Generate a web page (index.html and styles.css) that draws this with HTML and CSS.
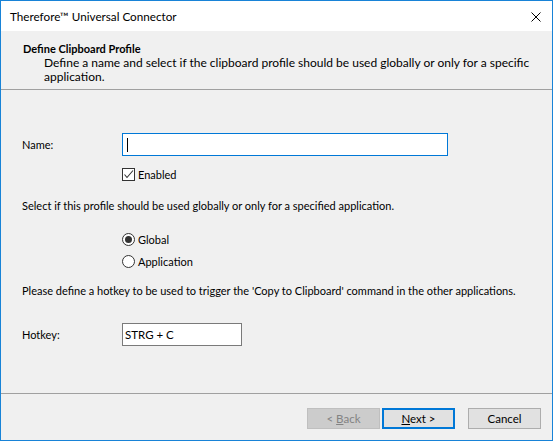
FILE: index.html
```html
<!DOCTYPE html>
<html>
<head>
<meta charset="utf-8">
<link rel="stylesheet" href="styles.css">
</head>
<body>
<div class="window">
  <div class="titlebar">
    <span class="title">Therefore™ Universal Connector</span>
    <svg class="close" width="10" height="10" viewBox="0 0 10 10"><path d="M0.5 0.5 L9.5 9.5 M9.5 0.5 L0.5 9.5" stroke="#000" stroke-width="1"/></svg>
  </div>
  <div class="header">
    <div class="h-title">Define Clipboard Profile</div>
    <div class="h-desc">Define a name and select if the clipboard profile should be used globally or only for a specific<br>application.</div>
  </div>
  <div class="content">
    <div class="row name-row">
      <label class="label">Name:</label>
      <div class="input focused"><span class="caret"></span></div>
    </div>
    <div class="row check-row">
      <span class="label"></span>
      <span class="check"><svg width="11" height="11" viewBox="0 0 11 11"><path d="M1.5 5.5 L4 8.5 L10 1.5" fill="none" stroke="#333" stroke-width="1.1"/></svg></span>
      <span class="opt">Enabled</span>
    </div>
    <p class="text sel-text">Select if this profile should be used globally or only for a specified application.</p>
    <div class="row radio-row first">
      <span class="label"></span>
      <span class="radio on"><span class="dot"></span></span>
      <span class="opt">Global</span>
    </div>
    <div class="row radio-row">
      <span class="label"></span>
      <span class="radio"></span>
      <span class="opt">Application</span>
    </div>
    <p class="text hk-text">Please define a hotkey to be used to trigger the 'Copy to Clipboard' command in the other applications.</p>
    <div class="row hk-row">
      <label class="label">Hotkey:</label>
      <div class="input hotkey">STRG + C</div>
    </div>
  </div>
  <div class="footer">
    <button class="btn disabled">&lt; <u>B</u>ack</button>
    <button class="btn default"><u>N</u>ext &gt;</button>
    <button class="btn cancel">Cancel</button>
  </div>
</div>
</body>
</html>
```
FILE: styles.css
```css
* { box-sizing: border-box; }
html, body { margin: 0; padding: 0; }
body {
  font-family: "Lato", "Noto Sans", sans-serif;
  font-size: 11px;
  color: #000;
  background: #f0f0f0;
}
.window {
  width: 553px;
  height: 441px;
  border: 1px solid #1883d7;
  display: flex;
  flex-direction: column;
  background: #f0f0f0;
}
.titlebar {
  height: 30px;
  background: #fff;
  display: flex;
  align-items: center;
  justify-content: space-between;
  padding: 0 11px 0 9px;
  flex: none;
}
.title { font-size: 11.7px; color: #000; line-height: 16px; }
.close { margin-top: 1px; }
.header {
  height: 59px;
  flex: none;
  border-bottom: 1px solid #a0a0a0;
  padding: 10px 0 0 22px;
}
.h-title { font-weight: bold; line-height: 15px; font-size: 11px; }
.h-desc { padding-left: 21px; line-height: 14px; white-space: nowrap; font-size: 12px; }
.content {
  flex: 1;
  padding: 43px 0 0 21px;
}
.row { display: flex; align-items: center; }
.label { width: 100px; flex: none; }
.input {
  height: 23px;
  background: #fff;
  border: 1px solid #7a7a7a;
  display: flex;
  align-items: center;
  padding-left: 4px;
  font-size: 11px;
}
.input.focused { width: 326px; border-color: #0078d7; }
.caret { width: 1px; height: 14px; background: #000; }
.check-row { margin-top: 12px; height: 13px; }
.check {
  width: 13px; height: 13px; border: 1px solid #333; background: #fff;
  display: flex; align-items: center; justify-content: center; flex: none;
}
.opt { margin-left: 3px; line-height: 13px; }
.text { margin: 0; line-height: 16px; white-space: nowrap; }
.sel-text { margin-top: 17px; }
.radio-row { height: 13px; }
.radio-row.first { margin-top: 19px; }
.radio-row + .radio-row { margin-top: 9px; }
.radio {
  width: 13px; height: 13px; border: 1px solid #333; border-radius: 50%; background: #fff;
  display: flex; align-items: center; justify-content: center; flex: none;
}
.dot { width: 7px; height: 7px; border-radius: 50%; background: #333; }
.hk-text { margin-top: 15px; }
.hk-row { margin-top: 24px; }
.input.hotkey { width: 120px; height: 23px; padding-left: 2px; font-size: 11.5px; }
.footer {
  flex: none;
  height: 47px;
  border-top: 1px solid #a0a0a0;
  display: flex;
  justify-content: flex-end;
  align-items: flex-start;
  padding: 14px 11px 0 0;
}
.btn {
  width: 73px; height: 21px;
  font-family: inherit; font-size: 11.5px;
  background: #e1e1e1; border: 1px solid #adadad; color: #000;
  padding: 0; margin: 0;
}
.btn.disabled { background: #cccccc; border-color: #bfbfbf; color: #838383; }
.btn.default { border: 2px solid #0078d7; margin-left: 2px; }
.btn.cancel { margin-left: 13px; }
```
